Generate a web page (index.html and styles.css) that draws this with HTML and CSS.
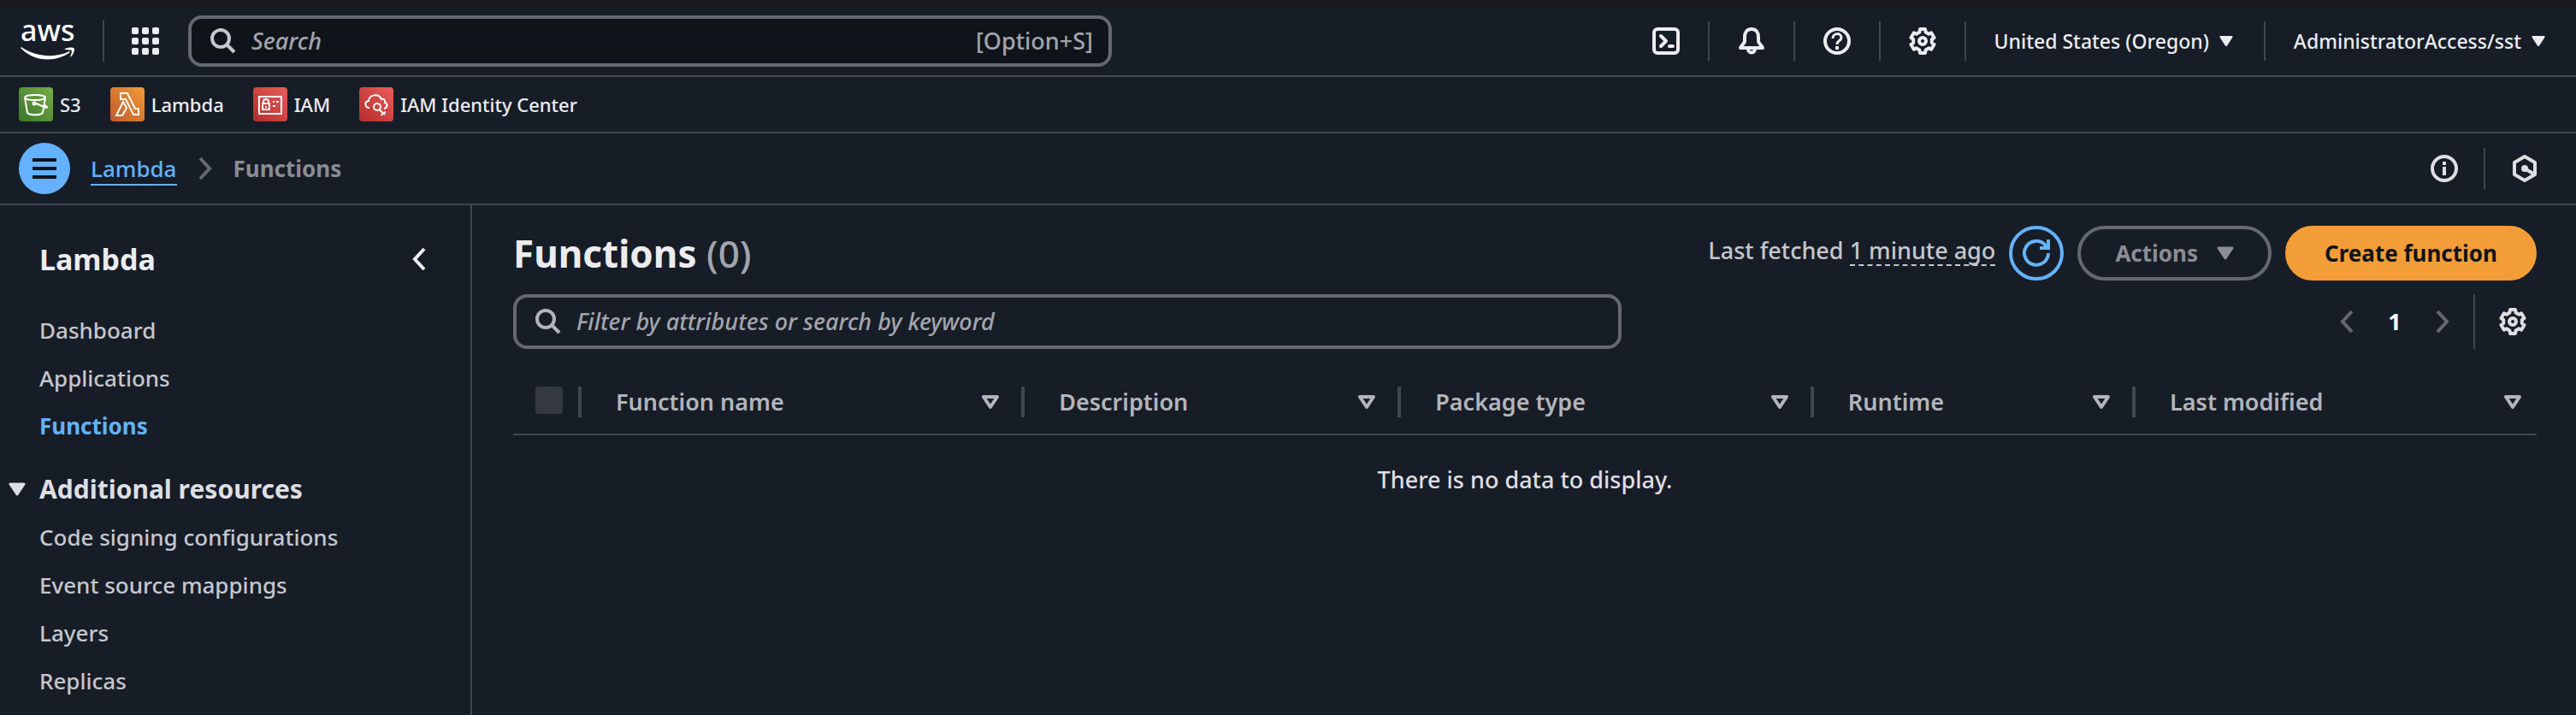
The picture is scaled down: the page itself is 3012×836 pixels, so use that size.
FILE: index.html
```html
<!DOCTYPE html>
<html lang="en">
<head>
<meta charset="utf-8">
<title>Functions | Lambda</title>
<link rel="stylesheet" href="styles.css">
</head>
<body>
<svg class="sprite" aria-hidden="true">
  <symbol id="gear" viewBox="0 0 32 32">
    <path d="M12.400 5.600L13 2h6l.6 3.600 3.600 2.100 2.900-1.400 3.400 5.800-2.700 1.800v4.200l2.700 1.800-3.400 5.800-2.900-1.400-3.600 2.100L19 30h-6l-.6-3.600-3.600-2.100-2.900 1.400-3.400-5.800 2.700-1.800v-4.200l-2.700-1.800 3.400-5.800 2.900 1.400z" fill="none" stroke="currentColor" stroke-width="4" stroke-linejoin="round"/>
    <circle cx="16" cy="16" r="4" fill="none" stroke="currentColor" stroke-width="4"/>
  </symbol>
  <symbol id="magnifier" viewBox="0 0 32 32">
    <circle cx="14" cy="13" r="10" fill="none" stroke="currentColor" stroke-width="4"/>
    <path d="M21 20l9 9" fill="none" stroke="currentColor" stroke-width="4"/>
  </symbol>
  <symbol id="caret" viewBox="0 0 20 16">
    <path d="M2 2h16l-8 12z" fill="currentColor" stroke="currentColor" stroke-width="3" stroke-linejoin="round"/>
  </symbol>
  <symbol id="sort" viewBox="0 0 20 16">
    <path d="M2 2h16l-8 12z" fill="none" stroke="currentColor" stroke-width="4" stroke-linejoin="round"/>
  </symbol>
  <symbol id="chevron" viewBox="0 0 16 28">
    <path d="M2 2l11 12-11 12" fill="none" stroke="currentColor" stroke-width="4"/>
  </symbol>
</svg>

<header class="topbar">
  <a class="logo" href="#" aria-label="AWS home">
    <span class="logo-text">aws</span>
    <svg viewBox="0 0 66 16">
      <path d="M0 2C16 19 42 19 58 7l-1-1C42 14 18 13 1 1z" fill="#fff"/>
      <path d="M51 4c4-3 10-3 12-1 0 4-2 8-5 10 1-3 2-6 2-8-3-1-6-1-9-1z" fill="#fff"/>
    </svg>
  </a>
  <span class="rule"></span>
  <button class="icon-button apps" aria-label="Services">
    <svg viewBox="0 0 32 32" fill="currentColor">
      <rect width="8" height="8" rx="2"/><rect x="12" width="8" height="8" rx="2"/><rect x="24" width="8" height="8" rx="2"/>
      <rect y="12" width="8" height="8" rx="2"/><rect x="12" y="12" width="8" height="8" rx="2"/><rect x="24" y="12" width="8" height="8" rx="2"/>
      <rect y="24" width="8" height="8" rx="2"/><rect x="12" y="24" width="8" height="8" rx="2"/><rect x="24" y="24" width="8" height="8" rx="2"/>
    </svg>
  </button>
  <label class="search global-search">
    <svg><use href="#magnifier"/></svg>
    <input type="search" placeholder="Search" aria-label="Search">
    <span class="shortcut">[Option+S]</span>
  </label>
  <nav class="utilities">
    <button class="utility" aria-label="CloudShell">
      <svg viewBox="0 0 32 32" fill="none" stroke="currentColor" stroke-width="4" stroke-linecap="round" stroke-linejoin="round">
        <rect x="2" y="2" width="28" height="28" rx="4"/><path d="M10 10l6 6-6 6"/><path d="M20 22h4"/>
      </svg>
    </button>
    <button class="utility" aria-label="Notifications">
      <svg viewBox="0 0 32 32" fill="none" stroke="currentColor" stroke-width="4" stroke-linejoin="round">
        <path d="M8 11c0-5 3-9 8-9s8 4 8 9v5c0 3 5 6 5 8H3c0-2 5-5 5-8z"/><path d="M12 25c0 6 8 6 8 0"/>
      </svg>
    </button>
    <button class="utility" aria-label="Help">
      <svg viewBox="0 0 32 32" fill="none" stroke="currentColor" stroke-width="4">
        <circle cx="16" cy="16" r="14"/><path d="M11 13c0-7 10-7 10-1 0 4-5 3-5 8" stroke-width="3"/><path d="M16 22v4"/>
      </svg>
    </button>
    <button class="utility" aria-label="Settings"><svg><use href="#gear"/></svg></button>
    <button class="utility menu">United States (Oregon)<svg class="caret"><use href="#caret"/></svg></button>
    <button class="utility menu">AdministratorAccess/sst<svg class="caret"><use href="#caret"/></svg></button>
  </nav>
</header>

<nav class="favorites" aria-label="Favorites">
  <a href="#"><svg class="service green" viewBox="0 0 40 40"><ellipse cx="19" cy="12" rx="12" ry="3"/><path d="M7 12l3 18c3 3 15 3 18 0l3-18M20 19l12 5c2 0 1-2-2-3"/><circle cx="18" cy="19" r="1.500"/></svg>S3</a>
  <a href="#"><svg class="service orange" viewBox="0 0 40 40"><path d="M12 7h8l9 18h4v7h-6l-9-18h-6zM15 17l4 7-5 9H7z"/></svg>Lambda</a>
  <a href="#"><svg class="service red" viewBox="0 0 40 40"><path d="M7 11h26v20H7zM11 19h8v7h-8zM12 19v-2c0-4 6-4 6 0v2M15 22v2M23 17h2M27 17h3M23 22h3"/></svg>IAM</a>
  <a href="#"><svg class="service red" viewBox="0 0 40 40"><path d="M12 24c-6 0-6-8-1-8 1-8 12-9 15-2 3-1 5 1 4 4 4 1 3 6-1 7M23 26l7 6M27 31l-1 2M29 30l2-1"/><circle cx="21" cy="23" r="4"/></svg>IAM Identity Center</a>
</nav>

<div class="crumbbar">
  <button class="menu-toggle" aria-label="Toggle navigation">
    <svg viewBox="0 0 28 24" stroke="currentColor" stroke-width="4"><path d="M0 2h28M0 12h28M0 22h28"/></svg>
  </button>
  <nav class="crumbs" aria-label="Breadcrumb">
    <a href="#">Lambda</a>
    <svg class="chevron"><use href="#chevron"/></svg>
    <span>Functions</span>
  </nav>
  <div class="tools">
    <button class="icon-button" aria-label="Info">
      <svg viewBox="0 0 32 32" fill="none" stroke="currentColor" stroke-width="4"><circle cx="16" cy="16" r="14"/><path d="M16 8v4M16 14v10"/></svg>
    </button>
    <span class="rule"></span>
    <button class="icon-button" aria-label="Diagnostics">
      <svg viewBox="0 0 32 32" fill="none" stroke="currentColor" stroke-width="4" stroke-linejoin="round"><path d="M16 2l12 7v14l-12 7-12-7V9z"/><path d="M16 16l10 6"/><circle cx="16" cy="16" r="4" fill="currentColor" stroke="none"/></svg>
    </button>
  </div>
</div>

<div class="shell">
  <aside class="sidebar">
    <div class="side-head">
      <h2>Lambda</h2>
      <button class="icon-button" aria-label="Close navigation"><svg class="chevron back"><use href="#chevron"/></svg></button>
    </div>
    <ul>
      <li><a href="#">Dashboard</a></li>
      <li><a href="#">Applications</a></li>
      <li><a class="active" href="#">Functions</a></li>
    </ul>
    <button class="section"><svg class="caret"><use href="#caret"/></svg>Additional resources</button>
    <ul>
      <li><a href="#">Code signing configurations</a></li>
      <li><a href="#">Event source mappings</a></li>
      <li><a href="#">Layers</a></li>
      <li><a href="#">Replicas</a></li>
    </ul>
  </aside>

  <main class="content">
    <div class="title-row">
      <h1>Functions <span class="count">(0)</span></h1>
      <div class="actions">
        <p class="fetched">Last fetched <span class="ago">1 minute ago</span></p>
        <button class="refresh" aria-label="Refresh">
          <svg viewBox="0 0 32 32" fill="none" stroke="currentColor" stroke-width="4"><path d="M30 16a14 14 0 1 1-4-10l3 4"/><path d="M30 0v10H20"/></svg>
        </button>
        <button class="pill outline" disabled>Actions<svg class="caret"><use href="#caret"/></svg></button>
        <button class="pill primary">Create function</button>
      </div>
    </div>
    <div class="filter-row">
      <label class="search filter">
        <svg><use href="#magnifier"/></svg>
        <input type="search" placeholder="Filter by attributes or search by keyword" aria-label="Filter functions">
      </label>
      <div class="pager">
        <button class="icon-button dim" aria-label="Previous page"><svg class="chevron back"><use href="#chevron"/></svg></button>
        <button class="page">1</button>
        <button class="icon-button dim" aria-label="Next page"><svg class="chevron"><use href="#chevron"/></svg></button>
        <span class="rule"></span>
        <button class="icon-button" aria-label="Preferences"><svg><use href="#gear"/></svg></button>
      </div>
    </div>
    <table>
      <colgroup><col class="c-check"><col class="c-name"><col class="c-desc"><col class="c-package"><col class="c-runtime"><col></colgroup>
      <thead>
        <tr>
          <th><div class="cell check"><input type="checkbox" disabled aria-label="Select all"></div></th>
          <th><div class="cell">Function name<svg class="sort"><use href="#sort"/></svg></div></th>
          <th><div class="cell">Description<svg class="sort"><use href="#sort"/></svg></div></th>
          <th><div class="cell">Package type<svg class="sort"><use href="#sort"/></svg></div></th>
          <th><div class="cell">Runtime<svg class="sort"><use href="#sort"/></svg></div></th>
          <th><div class="cell last">Last modified<svg class="sort"><use href="#sort"/></svg></div></th>
        </tr>
      </thead>
      <tbody>
        <tr><td colspan="6">There is no data to display.</td></tr>
      </tbody>
    </table>
  </main>
</div>
</body>
</html>
```
FILE: styles.css
```css
* { box-sizing: border-box; }

body {
  margin: 0;
  min-height: 100vh;
  display: flex;
  flex-direction: column;
  background: #161d26;
  color: #ebebf0;
  font-family: "Noto Sans", "Open Sans", sans-serif;
  font-size: 27px;
  font-weight: 500;
  line-height: 40px;
}

h1, h2, p, ul { margin: 0; padding: 0; }
ul { list-style: none; }
a { color: inherit; text-decoration: none; }
svg { display: block; flex: none; width: 32px; height: 32px; }
.sprite { position: absolute; width: 0; height: 0; }

button {
  display: flex;
  align-items: center;
  justify-content: center;
  margin: 0;
  padding: 0;
  border: 0;
  background: none;
  color: inherit;
  font: inherit;
  white-space: nowrap;
}

.rule { width: 2px; height: 48px; background: #424650; }

svg.caret, svg.sort { width: 20px; height: 16px; }
svg.chevron { width: 16px; height: 28px; }
.back { transform: scaleX(-1); }

/* Top bar */
.topbar {
  display: flex;
  align-items: center;
  height: 90px;
  padding-left: 24px;
  border-top: 8px solid #1a191e;
  border-bottom: 2px solid #424650;
}
.logo { width: 66px; margin-right: 30px; padding-bottom: 10px; }
.logo svg { width: 66px; height: 16px; }
.logo-text { display: block; width: 62px; color: #fff; font-size: 34px; line-height: 38px; text-align: center; }
.apps { margin: 0 34px 0 32px; }

.search {
  display: flex;
  align-items: center;
  padding: 0 18px 0 20px;
  border: 4px solid #656871;
  border-radius: 16px;
}
.search svg { margin-right: 18px; color: #b4b4bb; }
.search input {
  flex: 1;
  min-width: 0;
  padding: 0;
  border: 0;
  outline: 0;
  background: none;
  color: inherit;
  font: inherit;
}
.search input::placeholder { color: #a4a4ad; font-style: italic; opacity: 1; }
.global-search { width: 1080px; height: 60px; background: #0f141a; }
.global-search svg { color: #c6c6cd; }
.shortcut { color: #a4a4ad; }

.utilities { display: flex; align-items: center; margin-left: auto; }
.utility { height: 46px; padding: 0 33px; border-left: 2px solid #424650; }
.utility:first-child { border-left: 0; }
.menu { gap: 12px; padding-right: 36px; font-size: 23px; }
.menu svg.caret { width: 16px; height: 14px; }

/* Favorites */
.favorites {
  display: flex;
  align-items: center;
  gap: 34px;
  height: 66px;
  padding-left: 22px;
  border-bottom: 2px solid #424650;
  font-size: 22px;
}
.favorites a { display: flex; align-items: center; gap: 8px; }
.service { width: 40px; height: 40px; border-radius: 4px; fill: none; stroke: #fff; stroke-width: 2; }
.green { background: linear-gradient(45deg, #3a7526, #77ad4c); }
.orange { background: linear-gradient(45deg, #c1582c, #f09c37); }
.red { background: linear-gradient(45deg, #b32b2b, #ea5e5a); }

/* Breadcrumbs */
.crumbbar {
  display: flex;
  align-items: center;
  height: 84px;
  padding: 0 44px 0 22px;
  border-bottom: 2px solid #424650;
}
.menu-toggle { width: 60px; height: 60px; border-radius: 50%; background: #63b1ff; color: #0f141a; }
.menu-toggle svg { width: 28px; height: 24px; }
.crumbs { display: flex; align-items: center; gap: 25px; margin-left: 24px; color: #8c8c94; font-size: 26px; font-weight: 700; }
.crumbs a { height: 40px; border-bottom: 2px solid #63b1ff; color: #63b1ff; font-weight: 500; }
.crumbs .chevron { color: #656871; }
.tools { display: flex; align-items: center; gap: 30px; margin-left: auto; color: #dedee3; }

/* Page body */
.shell { display: flex; flex: 1; }
.sidebar {
  flex: none;
  width: 552px;
  padding: 40px 52px 0 46px;
  border-right: 2px solid #424650;
  color: #c6c6cd;
  font-size: 26px;
}
.side-head { display: flex; align-items: center; justify-content: space-between; height: 46px; margin-bottom: 32px; color: #ebebf0; }
.side-head h2 { font-size: 34px; font-weight: 700; }
.sidebar li { height: 56px; padding: 8px 0; }
.active { color: #63b1ff; font-weight: 700; }
.section { gap: 16px; height: 56px; margin: 18px 0 0 -36px; color: #dedee3; font-size: 30px; font-weight: 700; }

.content { flex: 1; min-width: 0; padding: 24px 46px 0 48px; }
.title-row { display: flex; align-items: center; justify-content: space-between; height: 64px; }
h1 { font-size: 44px; font-weight: 700; }
.count { color: #a4a4ad; font-weight: 500; }
.actions { display: flex; align-items: center; gap: 16px; }
.fetched { padding-bottom: 6px; color: #c6c6cd; }
.ago { display: inline-block; line-height: 32px; border-bottom: 2px dashed #c6c6cd; }
.refresh { width: 64px; height: 64px; border: 4px solid #63b1ff; border-radius: 50%; color: #63b1ff; }
.pill { height: 64px; padding: 0 42px; border: 4px solid #656871; border-radius: 32px; font-size: 26px; font-weight: 700; }
.outline { gap: 22px; padding: 0 40px; color: #8c8c94; }
.primary { border-color: #f29d38; background: #f29d38; color: #0f141a; }

.filter-row { display: flex; align-items: center; justify-content: space-between; margin-top: 16px; }
.filter { width: 1296px; height: 64px; }
.pager { display: flex; align-items: center; padding-right: 12px; color: #dedee3; }
.page { width: 96px; color: #fff; font-weight: 700; }
.pager .rule { height: 64px; margin: 0 28px; }
.pager .dim { color: #656871; }

/* Table */
table { width: 100%; margin-top: 16px; border-collapse: collapse; table-layout: fixed; }
.c-check { width: 80px; }
.c-name { width: 21.9%; }
.c-desc { width: 18.6%; }
.c-package { width: 20.4%; }
.c-runtime { width: 15.9%; }
th, td { padding: 0; }
th { height: 84px; padding: 14px 0 6px; border-bottom: 2px solid #424650; color: #b4b4bb; text-align: left; font-weight: 600; }
.cell {
  display: flex;
  align-items: center;
  justify-content: space-between;
  height: 36px;
  padding: 0 26px 0 40px;
  border-right: 4px solid #424650;
}
.cell.last { padding-right: 18px; border-right: 0; }
.cell.check { align-items: flex-start; padding: 0 0 0 26px; }
.check input { appearance: none; width: 32px; height: 32px; margin: 0; border-radius: 4px; background: #333843; }
td { height: 104px; color: #dedee3; text-align: center; }
```
